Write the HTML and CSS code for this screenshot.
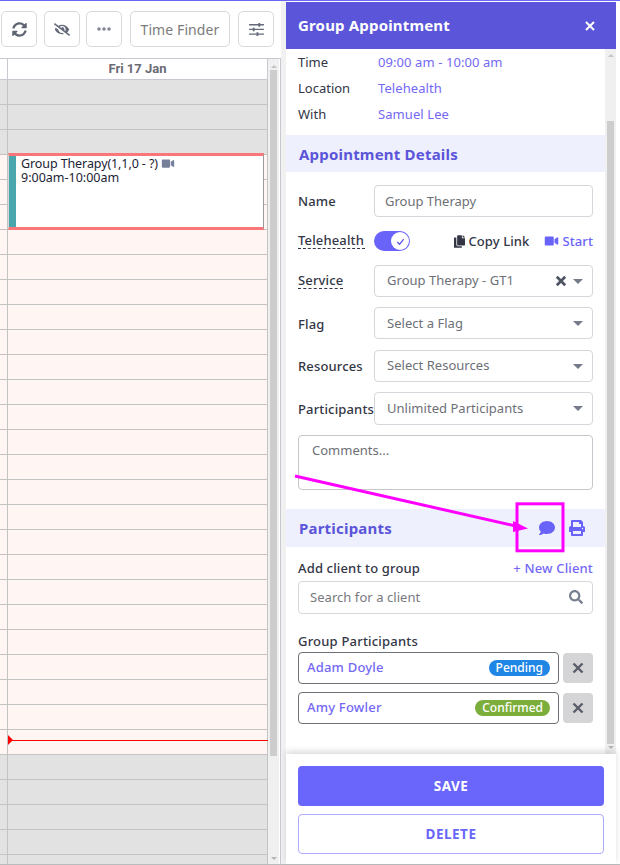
FILE: index.html
```html
<!DOCTYPE html>
<html lang="en">
<head>
<meta charset="utf-8">
<title>Group Appointment</title>
<link rel="stylesheet" href="styles.css">
</head>
<body>
<div class="page">
  <section class="calendar">
    <div class="toolbar">
      <button class="tool tool-a"><svg class="ic ic-sync" viewBox="0 0 512 512"><path d="M370.72 133.28C339.458 104.008 298.888 87.962 255.848 88c-77.458.068-144.328 53.178-162.791 126.85-1.344 5.363-6.122 9.15-11.651 9.15H24.103c-7.498 0-13.194-6.807-11.807-14.176C33.933 94.924 134.813 8 256 8c66.448 0 126.791 26.136 171.315 68.685L463.03 40.97C478.149 25.851 504 36.559 504 57.941V192c0 13.255-10.745 24-24 24H345.941c-21.382 0-32.09-25.851-16.971-40.971l41.75-41.749zM32 296h134.059c21.382 0 32.09 25.851 16.971 40.971l-41.75 41.75c31.262 29.273 71.835 45.319 114.876 45.28 77.418-.07 144.315-53.144 162.787-126.849 1.344-5.363 6.122-9.15 11.651-9.15h57.304c7.498 0 13.194 6.807 11.807 14.176C478.067 417.076 377.187 504 256 504c-66.448 0-126.791-26.136-171.315-68.685L48.97 471.03C33.851 486.149 8 475.441 8 454.059V320c0-13.255 10.745-24 24-24z"/></svg></button>
      <button class="tool tool-b"><svg class="ic ic-eye" viewBox="0 0 640 512"><path d="M320 400c-75.85 0-137.25-58.71-142.9-133.11L72.2 185.82c-13.79 17.3-26.48 35.59-36.72 55.59a32.35 32.35 0 0 0 0 29.19C89.71 376.41 197.07 448 320 448c26.91 0 52.87-4 77.89-10.46L346 397.39a144.13 144.13 0 0 1-26 2.61zm313.82 58.1l-110.55-85.44a331.25 331.25 0 0 0 81.25-102.07 32.35 32.35 0 0 0 0-29.19C550.29 135.59 442.93 64 320 64a308.15 308.15 0 0 0-147.32 37.7L45.46 3.37A16 16 0 0 0 23 6.18L3.37 31.45A16 16 0 0 0 6.18 53.9l588.36 454.73a16 16 0 0 0 22.46-2.81l19.64-25.27a16 16 0 0 0-2.82-22.45zm-183.72-142l-39.3-30.38A94.75 94.75 0 0 0 416 256a94.76 94.76 0 0 0-121.31-92.21A47.65 47.65 0 0 1 304 192a46.64 46.64 0 0 1-1.54 10l-73.61-56.89A142.31 142.31 0 0 1 320 112a143.92 143.92 0 0 1 144 144c0 21.63-5.29 41.79-13.9 60.11z"/></svg></button>
      <button class="tool tool-c"><svg class="ic ic-dots" viewBox="0 0 14 4"><circle cx="2" cy="2" r="1.8"/><circle cx="7" cy="2" r="1.8"/><circle cx="12" cy="2" r="1.8"/></svg></button>
      <button class="tool tool-text">Time Finder</button>
      <button class="tool tool-d"><svg class="ic ic-sliders" viewBox="0 0 16 14"><path d="M0 1.2h16v1.4H0zM0 6.2h16v1.4H0zM0 11.2h16v1.4H0z"/><path d="M10 0h2v4h-2zM4 5h2v4H4zM8 10h2v4H8z"/></svg></button>
    </div>
    <div class="cal-frame">
      <div class="cal-main">
        <div class="cal-head"><div class="gutter-head"></div><div class="day-head">Fri 17 Jan</div></div>
        <div class="cal-body">
          <div class="rows">
            <div class="row off"></div><div class="row off"></div><div class="row off"></div>
            <div class="row"></div><div class="row"></div><div class="row"></div><div class="row"></div><div class="row"></div>
            <div class="row"></div><div class="row"></div><div class="row"></div><div class="row"></div><div class="row"></div>
            <div class="row"></div><div class="row"></div><div class="row"></div><div class="row"></div><div class="row"></div>
            <div class="row"></div><div class="row"></div><div class="row"></div><div class="row"></div><div class="row"></div>
            <div class="row"></div><div class="row"></div><div class="row"></div><div class="row"></div>
            <div class="row off"></div><div class="row off"></div><div class="row off"></div><div class="row off"></div><div class="row off"></div>
          </div>
          <div class="event">
            <div class="event-bar"></div>
            <div class="event-text">
              <div class="event-title">Group Therapy(1,1,0 - ?) <svg class="ic ic-evvideo" viewBox="0 0 576 512"><path d="M336.2 64H47.8C21.4 64 0 85.4 0 111.8v288.4C0 426.6 21.4 448 47.8 448h288.4c26.4 0 47.8-21.4 47.8-47.8V111.8c0-26.4-21.4-47.8-47.8-47.8zm189.4 37.7L416 177.3v157.4l109.6 75.5c21.2 14.6 50.4-.3 50.4-25.8V127.5c0-25.4-29.1-40.4-50.4-25.8z"/></svg></div>
              <div>9:00am-10:00am</div>
            </div>
          </div>
          <div class="now-line"></div>
          <div class="now-arrow"></div>
        </div>
      </div>
      <div class="sb sb-cal"><div class="sb-up"></div><div class="sb-thumb"></div><div class="sb-down"></div></div>
    </div>
  </section>

  <div class="gap-strip"></div>

  <aside class="panel">
    <header class="panel-head"><h1>Group Appointment</h1><svg class="close" viewBox="0 0 10 10"><path d="M1 1l8 8M9 1l-8 8"/></svg></header>
    <div class="panel-mid">
      <div class="panel-scroll">
        <div class="info">
          <div class="info-row"><span class="info-label">Time</span><span class="link">09:00 am - 10:00 am</span></div>
          <div class="info-row"><span class="info-label">Location</span><span class="link">Telehealth</span></div>
          <div class="info-row"><span class="info-label">With</span><span class="link">Samuel Lee</span></div>
        </div>
        <h2 class="band band-details">Appointment Details</h2>
        <div class="form">
          <div class="f-row f-name"><span class="f-label">Name</span><div class="field h32"><span class="val-input">Group Therapy</span></div></div>
          <div class="f-row f-tele">
            <span class="f-label dashed">Telehealth</span>
            <div class="toggle"><div class="knob"><svg class="check" viewBox="0 0 12 12"><path d="M2.5 6.5l2.5 2.5 4.5-5.5"/></svg></div></div>
            <div class="tele-actions">
              <span class="copy"><svg class="ic ic-copy" viewBox="0 0 448 512"><path d="M320 448v40c0 13.255-10.745 24-24 24H24c-13.255 0-24-10.745-24-24V120c0-13.255 10.745-24 24-24h72v296c0 30.879 25.121 56 56 56h168zm0-344V0H152c-13.255 0-24 10.745-24 24v368c0 13.255 10.745 24 24 24h272c13.255 0 24-10.745 24-24V128H344c-13.2 0-24-10.8-24-24zm120.971-31.029L375.029 7.029A24 24 0 0 0 358.059 0H352v96h96v-6.059a24 24 0 0 0-7.029-16.97z"/></svg>Copy Link</span>
              <span class="start"><svg class="ic ic-video" viewBox="0 0 576 512"><path d="M336.2 64H47.8C21.4 64 0 85.4 0 111.8v288.4C0 426.6 21.4 448 47.8 448h288.4c26.4 0 47.8-21.4 47.8-47.8V111.8c0-26.4-21.4-47.8-47.8-47.8zm189.4 37.7L416 177.3v157.4l109.6 75.5c21.2 14.6 50.4-.3 50.4-25.8V127.5c0-25.4-29.1-40.4-50.4-25.8z"/></svg>Start</span>
            </div>
          </div>
          <div class="f-row f-service"><span class="f-label dashed">Service</span><div class="field select h32"><span class="val-select">Group Therapy - GT1</span><svg class="clear" viewBox="0 0 10 10"><path d="M1.5 1.5l7 7M8.5 1.5l-7 7"/></svg><span class="caret"></span></div></div>
          <div class="f-row f-flag"><span class="f-label">Flag</span><div class="field select h32"><span class="val-select">Select a Flag</span><span class="caret"></span></div></div>
          <div class="f-row f-res"><span class="f-label">Resources</span><div class="field select h32"><span class="val-select">Select Resources</span><span class="caret"></span></div></div>
          <div class="f-row f-part"><span class="f-label">Participants</span><div class="field select h33"><span class="val-select">Unlimited Participants</span><span class="caret"></span></div></div>
          <div class="comments">Comments...</div>
        </div>
        <div class="band band-part">
          <h2>Participants</h2>
          <div class="band-icons">
            <svg class="ic ic-comment" viewBox="0 0 512 512"><path d="M256 32C114.6 32 0 125.1 0 240c0 49.6 21.4 95 57 130.7C44.5 421.1 2.7 466 2.2 466.5c-2.2 2.3-2.8 5.7-1.5 8.7S4.8 480 8 480c66.3 0 116-31.8 140.6-51.4 32.7 12.3 69 19.4 107.4 19.4 141.4 0 256-93.1 256-208S397.4 32 256 32z"/></svg>
            <svg class="ic ic-print" viewBox="0 0 512 512"><path d="M448 192V77.25c0-8.49-3.37-16.62-9.37-22.63L393.37 9.37c-6-6-14.14-9.37-22.63-9.37H96C78.33 0 64 14.33 64 32v160c-35.35 0-64 28.65-64 64v112c0 8.84 7.16 16 16 16h48v96c0 17.67 14.33 32 32 32h320c17.67 0 32-14.33 32-32v-96h48c8.84 0 16-7.16 16-16V256c0-35.35-28.65-64-64-64zm-64 256H128v-96h256v96zm0-224H128V64h192v48c0 8.84 7.16 16 16 16h48v96zm48 72c-13.25 0-24-10.75-24-24 0-13.26 10.75-24 24-24s24 10.74 24 24c0 13.25-10.75 24-24 24z"/></svg>
          </div>
        </div>
        <div class="clients">
          <div class="add-head"><span class="add-label">Add client to group</span><span class="new-client">+ New Client</span></div>
          <div class="search"><span class="search-ph">Search for a client</span><svg class="ic ic-search" viewBox="0 0 512 512"><path d="M505 442.7L405.3 343c-4.5-4.5-10.6-7-17-7H372c27.6-35.3 44-79.7 44-128C416 93.1 322.9 0 208 0S0 93.1 0 208s93.1 208 208 208c48.3 0 92.7-16.4 128-44v16.3c0 6.4 2.5 12.5 7 17l99.7 99.7c9.4 9.4 24.6 9.4 33.9 0l28.3-28.3c9.4-9.4 9.4-24.6.1-34zM208 336c-70.7 0-128-57.2-128-128 0-70.7 57.2-128 128-128 70.7 0 128 57.2 128 128 0 70.7-57.2 128-128 128z"/></svg></div>
          <div class="group-label">Group Participants</div>
          <div class="p-row"><div class="p-card"><span class="p-name">Adam Doyle</span><span class="pill pending">Pending</span></div><div class="p-x"><svg class="x-icon" viewBox="0 0 12 12"><path d="M1.5 1.5l9 9M10.5 1.5l-9 9"/></svg></div></div>
          <div class="p-row p-second"><div class="p-card"><span class="p-name">Amy Fowler</span><span class="pill confirmed">Confirmed</span></div><div class="p-x"><svg class="x-icon" viewBox="0 0 12 12"><path d="M1.5 1.5l9 9M10.5 1.5l-9 9"/></svg></div></div>
        </div>
      </div>
      <div class="sb sb-panel"><div class="sb-up"></div><div class="sb-spacer"></div><div class="sb-thumb"></div><div class="sb-down"></div></div>
    </div>
    <footer class="panel-foot">
      <button class="btn btn-save">SAVE</button>
      <button class="btn btn-delete">DELETE</button>
    </footer>
  </aside>
</div>

<svg class="annotation" viewBox="0 0 620 865" aria-hidden="true">
  <rect class="anno-box" x="517" y="503.8" width="46" height="47"/>
  <path class="anno-line" d="M295 476L520 527"/>
  <path class="anno-head" d="M528 528.5L513 521L513 532Z"/>
</svg>
</body>
</html>
```

FILE: styles.css
```css
* { box-sizing: border-box; }
html, body { margin: 0; padding: 0; height: 865px; overflow: hidden; background: #fff; }
body { font-family: "Noto Sans", "Open Sans", sans-serif; font-size: 13px; color: #333645; position: relative; }
h1, h2 { margin: 0; }
button { font-family: inherit; padding: 0; }

.page { display: flex; height: 865px; border-top: 1px solid #6a66f4; border-bottom: 1px solid #b8bcbc; }

/* calendar */
.calendar { width: 281px; flex: none; display: flex; flex-direction: column; }
.toolbar { height: 57px; flex: none; display: flex; align-items: flex-start; padding: 10px 0 0 1px; }
.tool { height: 36px; width: 36px; flex: none; background: #fff; border: 1px solid #d9d9d9; border-radius: 5px; display: flex; align-items: center; justify-content: center; color: #6f7280; }
.tool-b { margin-left: 7px; }
.tool-c { margin-left: 6px; }
.tool-text { width: 100px; margin-left: 8px; font-size: 14px; letter-spacing: .1px; color: #7b7b7b; }
.tool-d { margin-left: 8px; }
.ic { display: block; fill: currentColor; flex: none; }
.ic-sync { width: 15px; height: 15px; color: #5f6472; }
.ic-eye { width: 16px; height: 13px; color: #646a7a; }
.ic-dots { width: 14px; height: 4px; color: #848894; }
.ic-sliders { width: 15px; height: 13px; color: #646a7a; }

.cal-frame { flex: 1; min-height: 0; display: flex; border: 1px solid #c8c8d0; border-left: 0; border-bottom: 0; }
.cal-main { width: 268px; flex: none; display: flex; flex-direction: column; }
.cal-head { height: 21px; flex: none; display: flex; border-bottom: 1px solid #c8c8d0; }
.gutter-head { width: 8px; flex: none; border-right: 1px solid #c8c8d0; }
.day-head { flex: 1; border-right: 1px solid #c8c8d0; text-align: center; font-family: Roboto, sans-serif; font-weight: 700; font-size: 13px; line-height: 20px; color: #6a6a74; }
.cal-body { flex: 1; position: relative; overflow: hidden; }
.rows { display: flex; flex-direction: column; }
.row { height: 25px; flex: none; background: #fff6f3; border-bottom: 1px solid #c3c3c3; border-right: 1px solid #c3c3c3; background-image: linear-gradient(#c3c3c3, #c3c3c3); background-size: 1px 100%; background-position: 7px 0; background-repeat: no-repeat; }
.row.off { background-color: #e2e2e2; }

.event { position: absolute; left: 8px; top: 73px; width: 256px; height: 77px; display: flex; background: #fff; border-top: 3px solid #fa7678; border-bottom: 3px solid #fa7678; border-right: 1px solid #9a9a9a; border-left: 1px solid #d8d8d8; }
.event-bar { width: 7px; flex: none; background: #48a6ac; }
.event-text { padding: 0 0 0 5px; font-size: 12.5px; line-height: 14px; color: #1c2333; }
.event-title { display: flex; align-items: center; gap: 3px; letter-spacing: -.1px; line-height: 15px; }
.ic-evvideo { width: 14px; height: 11px; color: #77809a; }
.now-line { position: absolute; left: 8px; right: 0; top: 660px; height: 1px; background: #f00; }
.now-arrow { position: absolute; left: 8px; top: 655px; width: 0; height: 0; border-left: 5px solid #f00; border-top: 5px solid transparent; border-bottom: 5px solid transparent; }

.sb { flex: none; display: flex; flex-direction: column; align-items: center; background: #f0f0f0; }
.sb-cal { width: 11px; border-right: 0; }
.sb-thumb { width: 7px; background: #cdcdcd; }
.sb-cal .sb-thumb { flex: 1; margin-top: 2px; margin-bottom: 101px; }
.sb-up, .sb-down { width: 0; height: 0; flex: none; border-left: 3px solid transparent; border-right: 3px solid transparent; }
.sb-up { border-bottom: 3px solid #c4c4c4; margin-top: 5px; }
.sb-down { border-top: 3px solid #b5b5b5; margin-bottom: 4px; }
.sb-cal .sb-up { margin-top: 6px; }

.gap-strip { width: 5px; flex: none; background: #f1f1f1; margin-left: 0; }

/* panel */
.panel { width: 330px; flex: none; display: flex; flex-direction: column; min-height: 0; }
.panel-head { height: 47px; flex: none; background: #5b55d9; color: #fff; display: flex; align-items: center; justify-content: space-between; padding: 0 21px 0 12px; margin-top: 1px; }
.panel-head h1 { font-size: 15px; font-weight: 700; letter-spacing: .17px; padding-bottom: 2px; }
.close { width: 10px; height: 10px; fill: none; stroke: #fff; stroke-width: 2; }
.panel-mid { flex: 1; min-height: 0; display: flex; position: relative; }
.panel-scroll { width: 319px; flex: none; overflow: hidden; }
.sb-panel { width: 11px; }
.sb-panel .sb-spacer { height: 64px; flex: none; }
.sb-panel .sb-thumb { flex: 1; margin-bottom: 2px; }
.sb-panel .sb-down { margin-bottom: 5px; }

.info { padding: 0 12px; height: 86px; }
.info-row { height: 26px; display: flex; align-items: center; }
.info-label { width: 80px; flex: none; font-size: 13px; color: #333645; }
.link { color: #7468f5; font-size: 13px; letter-spacing: .08px; }

.band { background: #eef0fd; padding: 0 13px; color: #5b55d9; font-size: 15px; font-weight: 700; letter-spacing: .2px; }
.band-details { height: 37px; line-height: 38px; }
.band-part { height: 38px; display: flex; align-items: center; justify-content: space-between; margin-top: 19px; }
.band-part h2 { font-size: 15px; font-weight: 700; padding-bottom: 1px; }
.band-icons { display: flex; align-items: center; gap: 14px; margin-right: 7px; color: #6a63fa; }
.ic-comment { width: 16px; height: 16px; }
.ic-print { width: 16px; height: 16px; }

.form { padding: 13px 12px 0; }
.f-row { display: flex; align-items: center; }
.f-label { width: 76px; flex: none; font-size: 13px; font-weight: 500; letter-spacing: .15px; color: #333645; white-space: nowrap; }
.f-label.dashed { border-bottom: 1px dashed #333645; line-height: 16px; align-self: flex-start; }
.f-tele .f-label.dashed { width: 67px; margin-top: 1px; }
.f-service .f-label.dashed { width: 45px; margin-right: 31px; margin-top: 7px; }
.f-flag .f-label { padding-top: 2px; }
.f-part .f-label { padding-top: 1px; }
.field { flex: 1; min-width: 0; display: flex; align-items: center; border: 1px solid #d6d6dc; border-radius: 4px; background: #fff; }
.h32 { height: 32px; }
.h33 { height: 33px; }
.select { padding: 0 9px 0 12px; }
.val-input { padding-left: 10px; color: #6d7076; }
.val-select { flex: 1; color: #6d7076; letter-spacing: .03px; line-height: 26px; padding-bottom: 3px; }
.f-flag .val-select, .f-part .val-select { padding-bottom: 1px; }
.clear { width: 12px; height: 12px; fill: none; stroke: #4d5260; stroke-width: 2.2; margin-right: 6px; }
.caret { width: 0; height: 0; border-left: 5px solid transparent; border-right: 5px solid transparent; border-top: 5px solid #757b8a; }

.f-tele { height: 20px; margin-top: 14px; }
.toggle { width: 36px; height: 20px; flex: none; margin-left: 9px; border-radius: 10px; background: #6a63fa; position: relative; }
.knob { position: absolute; right: 1px; top: 1px; width: 18px; height: 18px; border-radius: 50%; background: #fff; display: flex; align-items: center; justify-content: center; }
.check { width: 11px; height: 11px; fill: none; stroke: #5e58e0; stroke-width: 1.4; }
.tele-actions { margin-left: auto; display: flex; align-items: center; gap: 15px; font-weight: 500; letter-spacing: .1px; }
.copy { display: flex; align-items: center; gap: 3px; color: #333645; }
.ic-copy { width: 11px; height: 13px; color: #333645; }
.start { display: flex; align-items: center; gap: 3px; color: #6a63fa; }
.ic-video { width: 15px; height: 12px; color: #6a63fa; }

.f-service { margin-top: 14px; }
.f-flag { margin-top: 10px; }
.f-res { margin-top: 11px; }
.f-part { margin-top: 10px; }
.comments { height: 55px; margin-top: 10px; border: 1px solid #c6c6cc; border-radius: 4px; padding: 5px 13px; color: #6d7076; }

.clients { padding: 12px 12px 0; }
.add-head { display: flex; justify-content: space-between; align-items: center; height: 18px; }
.add-label { font-weight: 500; letter-spacing: .15px; }
.new-client { color: #7468f5; font-weight: 500; letter-spacing: .15px; }
.search { height: 33px; margin-top: 4px; border: 1px solid #d6d6dc; border-radius: 4px; display: flex; align-items: center; justify-content: space-between; padding: 0 9px 1px 11px; color: #777a80; letter-spacing: .05px; }
.ic-search { width: 14px; height: 14px; color: #76808f; }
.group-label { margin-top: 18px; height: 18px; line-height: 18px; font-weight: 500; letter-spacing: .2px; }
.p-row { display: flex; align-items: center; gap: 4px; margin-top: 2px; }
.p-second { margin-top: 8px; }
.p-card { width: 261px; height: 32px; flex: none; border: 1px solid #6e7078; border-radius: 4px; display: flex; align-items: center; justify-content: space-between; padding: 0 8px; }
.p-name { color: #7468f5; font-weight: 500; padding-bottom: 2px; letter-spacing: .2px; }
.pill { height: 16px; border-radius: 8px; padding: 0 7px; color: #fff; font-size: 12px; font-weight: 500; line-height: 16px; }
.pending { background: #1f86e6; }
.confirmed { background: #7cae3c; }
.p-x { width: 30px; height: 30px; flex: none; border-radius: 4px; background: #d5d5d7; display: flex; align-items: center; justify-content: center; }
.x-icon { width: 12px; height: 12px; stroke: #5a5e6a; stroke-width: 2.4; fill: none; }

.panel-foot { height: 110px; flex: none; background: #fff; box-shadow: 0 -3px 6px rgba(0,0,0,.14); padding: 12px 12px 0; display: flex; flex-direction: column; gap: 8px; position: relative; }
.btn { height: 40px; border-radius: 4px; font-size: 13.5px; font-weight: 700; letter-spacing: .5px; }
.btn-save { background: #6a66fb; border: 0; color: #fff; }
.btn-delete { background: #fff; border: 1px solid #aeaafc; color: #6a66fb; }

/* annotation over the screenshot */
.annotation { position: absolute; left: 0; top: 0; width: 620px; height: 865px; pointer-events: none; }
.anno-box { fill: none; stroke: #ff00ff; stroke-width: 3; }
.anno-line { fill: none; stroke: #ff00ff; stroke-width: 3; }
.anno-head { fill: #ff00ff; }
```
